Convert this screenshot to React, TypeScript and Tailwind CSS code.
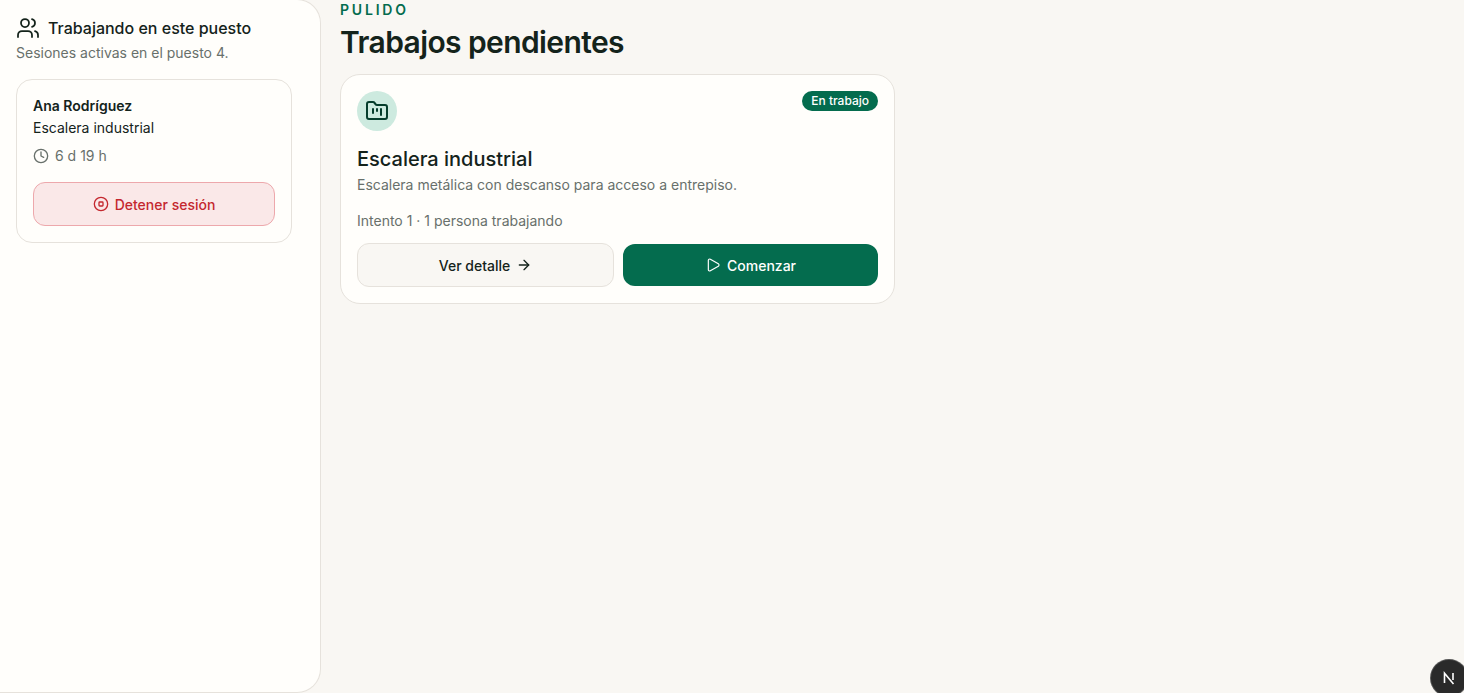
import { Users, Clock, CircleStop, FolderKanban, ArrowRight, Play } from "lucide-react";

export default function App() {
  return (
    <div className="relative flex h-[693px] w-full overflow-hidden bg-[#f9f7f3] text-[#14231b] font-['Inter',sans-serif] antialiased">
      <aside className="w-[321px] h-[694px] shrink-0 -mt-px rounded-r-[24px] border border-l-0 border-[#e6e2dc] bg-[#fffefb] pt-[16px] px-[16px]">
        <div className="flex items-center gap-2 h-[24px]">
          <Users className="size-6" strokeWidth={1.75} />
          <h2 className="text-[16px] leading-6 font-medium text-[#14231b]">Trabajando en este puesto</h2>
        </div>
        <p className="mt-[3px] text-[14px] leading-5 text-[#68706b]">Sesiones activas en el puesto 4.</p>
        <div className="mt-[16px] w-[276px] rounded-[16px] border border-[#e6e2dc] px-[16px] pt-[16px] pb-[16px]">
          <p className="text-[14px] leading-5 font-semibold">Ana Rodríguez</p>
          <p className="mt-[2px] text-[14px] leading-5">Escalera industrial</p>
          <div className="mt-[8px] flex items-center gap-[6px] text-[14px] leading-5 text-[#68706b]">
            <Clock className="size-4" strokeWidth={2} />
            <span>6 d 19 h</span>
          </div>
          <button className="mt-[16px] flex h-[44px] w-full items-center justify-center gap-[6px] rounded-[12px] border border-[#eda8ac] bg-[#fae8e8] text-[14px] font-medium text-[#c4272e]">
            <CircleStop className="size-4" strokeWidth={2} />
            Detener sesión
          </button>
        </div>
      </aside>
      <main className="flex-1 pl-[19px]">
        <p className="text-[14px] leading-5 font-semibold tracking-[0.2em] text-[#046c4e]">PULIDO</p>
        <h1 className="mt-[4px] text-[30px] leading-9 font-semibold tracking-[-0.02em] text-[#14231b]">Trabajos pendientes</h1>
        <section className="mt-[14px] w-[555px] rounded-[20px] border border-[#e6e2dc] bg-[#fffefb] p-[16px]">
          <div className="flex items-start justify-between">
            <div className="flex size-10 items-center justify-center rounded-full bg-[#cdeadf] text-[#053d2c]">
              <FolderKanban className="size-6" strokeWidth={2} />
            </div>
            <span className="flex h-[20px] items-center rounded-full bg-[#046c4e] px-[9px] text-[12px] font-medium text-white">En trabajo</span>
          </div>
          <h3 className="mt-[14px] text-[20px] leading-7 font-medium">Escalera industrial</h3>
          <p className="mt-[2px] text-[14px] leading-5 text-[#68706b]">Escalera metálica con descanso para acceso a entrepiso.</p>
          <p className="mt-[16px] text-[14px] leading-5 text-[#68706b]">Intento 1 · 1 persona trabajando</p>
          <div className="mt-[12px] flex gap-[9px]">
            <button className="flex h-[44px] w-[257px] items-center justify-center gap-[6px] rounded-[12px] border border-[#e6e2dc] bg-[#f9f7f3] text-[14px] font-medium">
              Ver detalle
              <ArrowRight className="size-4" />
            </button>
            <button className="my-px flex h-[42px] w-[255px] items-center justify-center gap-[6px] rounded-[12px] bg-[#046c4e] text-[14px] font-medium text-white">
              <Play className="size-4" strokeWidth={1.75} />
              Comenzar
            </button>
          </div>
        </section>
      </main>
      <div className="absolute left-[1431px] top-[660px] flex size-[36px] items-center justify-center rounded-full bg-[#2a2a2a] ring-1 ring-[#555]">
        <svg width="16" height="16" viewBox="0 0 16 16" fill="none" stroke="#fff" strokeWidth="1.6"><path d="M3.5 13V3.2L12.5 14" /><path d="M12 3v7" /></svg>
      </div>
    </div>
  );
}
